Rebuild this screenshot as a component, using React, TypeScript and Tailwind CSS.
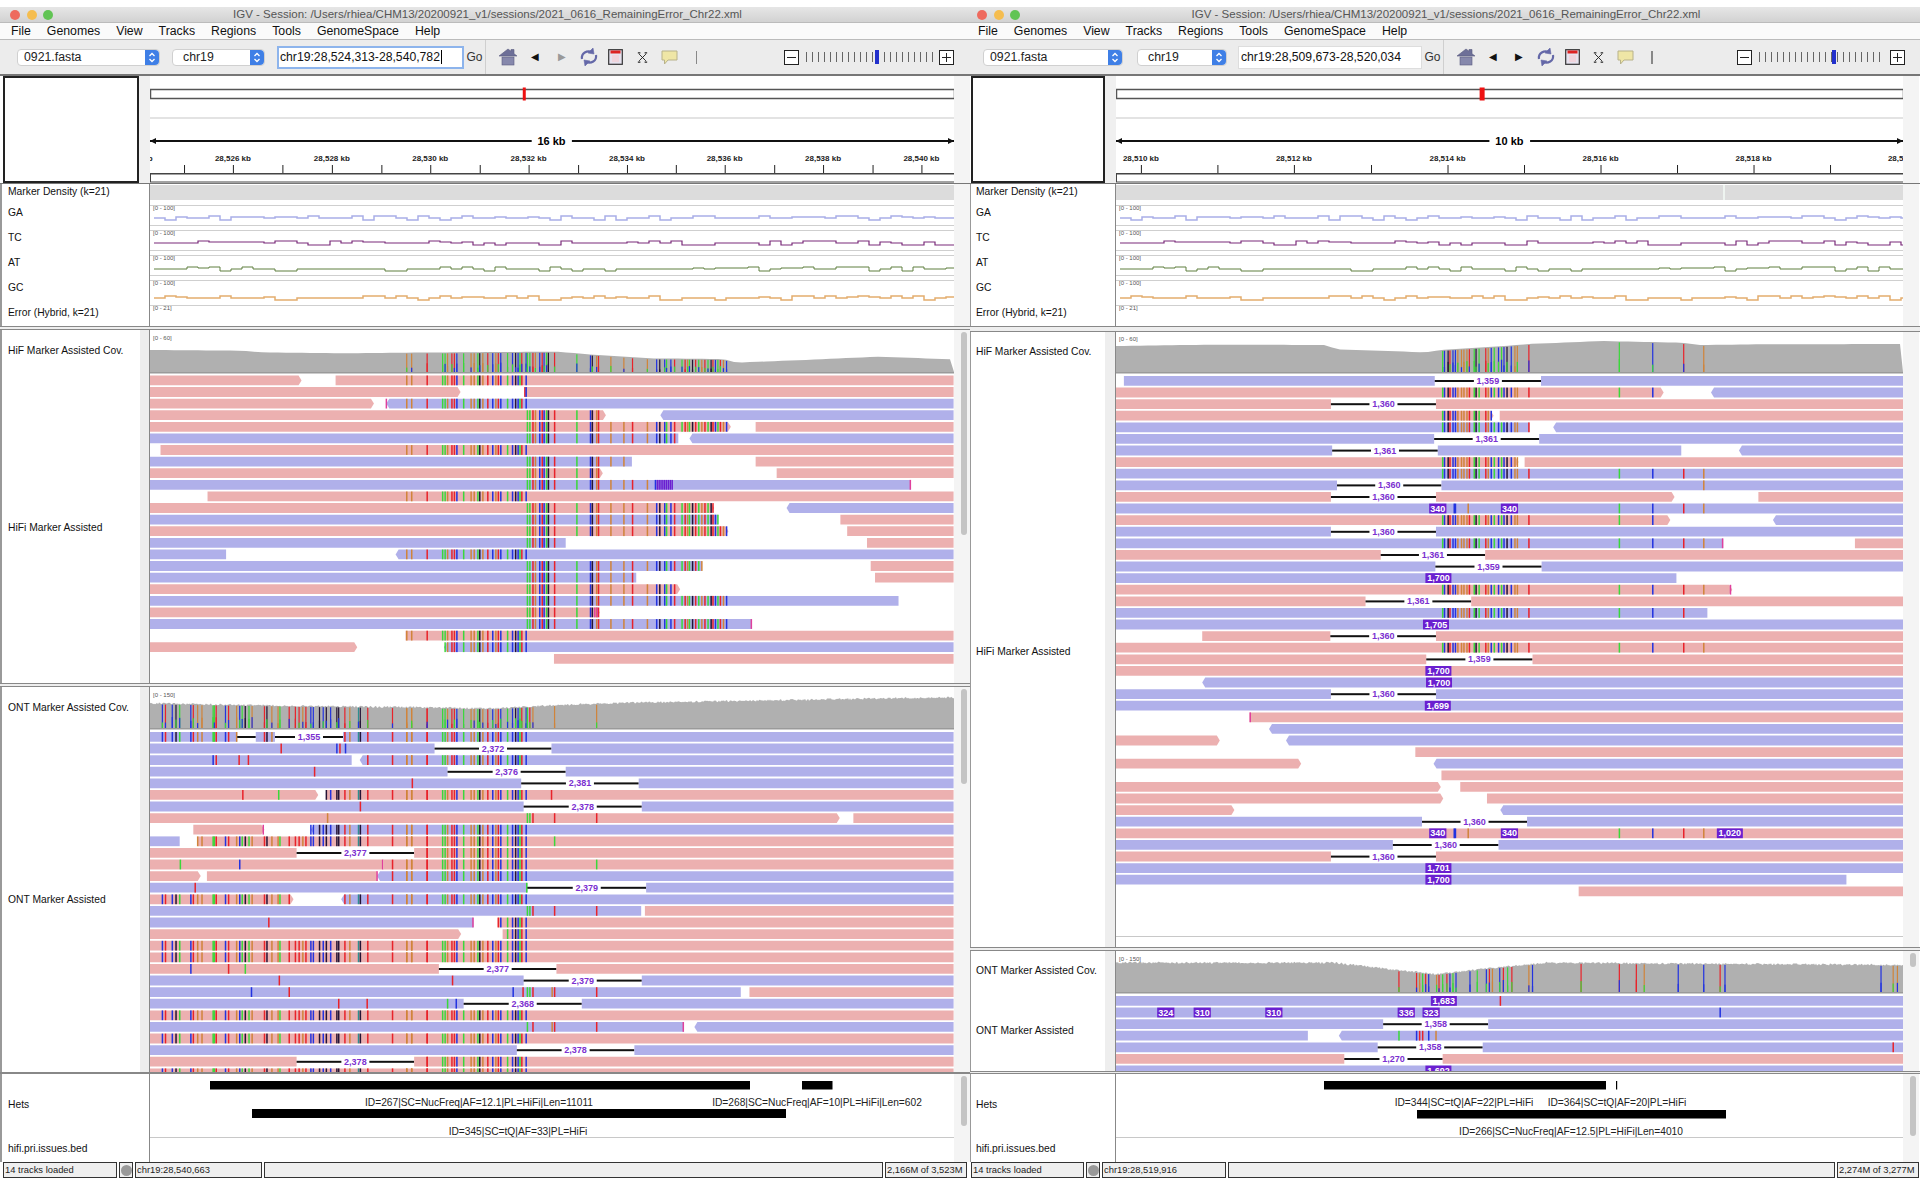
import React from "react";

// colours for mismatch stripes
const COL: Record<string, string> = {
  r: "#e8232a",
  g: "#3ad83a",
  b: "#2233e0",
  o: "#d0843a",
  k: "#241436",
  m: "#e0409c",
  v: "#6a1fd0",
  t: "#2f8f8f",
};

const A = "658o 666o 691r 716g 720g 724o 731r 735r 739b 750g 762o 767o 773g 776k 781o 789r 797b 802o 806r 810b 821g 829b 834k 838b 841g 844r 851b";
const B = "853g 857g 862r 866o 873b 877r 880b 884g 887k 897r 933g 955b 958k 965o 968r";
const C = "988o 1009o 1023r 1047o 1062b 1067k 1075b 1078g 1085b 1091r 1103g 1108r 1112o 1115g 1120k 1125r 1130g 1135o 1140r 1145g 1150k 1153r 1157b 1161g 1165r 1170o 1175b";
const C1 = "988o 1009o 1023r 1047o";
const D = "263b 268r 279b 285k 291g 309b 313r 320o 327o 345g 347g 350r 365b 370r 383o 388b 392g 397k 403g 408o 428r 432k 440o 450o 453g 468r 478r 484r 490o 495r 503b 507b 517k 523b 528k 535b 545k 548k 558r 566o 580t 583k 595r";
const O = "635r 658o 666o 691r";
const E = "778g 781b 787k 790r 795b 799b 803o 809o 813o 818o 822r 830g 833k 838g 849r 853o 858b 863g 870b 875g 879b 884k 891b 897o 901o 920r";
const F = "1069g 1124b 1175r 1208o";

type Item =
  | { k: "p" | "b"; a: number; b: number; s: string; d: string }
  | { k: "g"; a: number; b: number; l: string }
  | { k: "i"; x: number; l: string };

const p = (a: number, b: number, s = "", d = ""): Item => ({ k: "p", a, b, s, d });
const bl = (a: number, b: number, s = "", d = ""): Item => ({ k: "b", a, b, s, d });
const g = (a: number, b: number, l = ""): Item => ({ k: "g", a, b, l });
const ins = (x: number, l: string): Item => ({ k: "i", x, l });

const hifiLeft: Item[][] = [
  [p(243, 488, "", ">"), p(543, 1542, A)],
  [p(243, 745, "", ">"), p(848, 1542, "849r 851b")],
  [p(243, 605, "", ">"), bl(625, 1542, "625m " + A, "<")],
  [p(243, 980, B, ">"), bl(1068, 1542, "", "<")],
  [p(243, 1182, `${B} ${C}`, ">"), p(1222, 1542)],
  [bl(243, 1097, `${B} ${C}`), bl(1115, 1542, "", "<")],
  [p(260, 1542, A)],
  [bl(243, 1022, `${B} ${C}`), p(1222, 1542)],
  [p(243, 975, B, ">"), p(1256, 1542)],
  [bl(243, 1473, `${B} ${C1} 1060b 1063v 1066v 1069v 1072v 1075v 1078v 1081v 1084v 1087v 1472m`), ],
  [p(336, 1542, A)],
  [p(243, 1155, `${B} ${C}`, ">"), bl(1272, 1542, "", "<")],
  [bl(243, 1161, `${B} ${C}`), p(1359, 1542)],
  [p(243, 1178, `${B} ${C}`, ">"), p(1370, 1542)],
  [bl(243, 915, B), p(1402, 1542)],
  [bl(243, 366), bl(640, 1542, A, "<")],
  [bl(243, 1135, `${B} ${C}`), p(1408, 1542)],
  [bl(243, 1029, `${B} ${C}`), p(1415, 1542)],
  [p(243, 1100, `${B} ${C}`, ">")],
  [bl(243, 1453, `${B} ${C}`)],
  [p(243, 970, `${B} 962m 966m`, ">")],
  [bl(243, 1216, `${B} ${C} 1215m`)],
  [p(656, 1542, A)],
  [p(243, 578, "", ">"), bl(718, 1542, A, "<")],
  [p(896, 1542)],
];

const ontLeft: Item[][] = [
  [bl(243, 384, D), g(384, 414), bl(414, 445, D), g(445, 555, "1,355"), bl(555, 1542, `${D} ${O} ${A}`)],
  [bl(243, 703, "455r 545b 550r 559b"), g(703, 892, "2,372"), bl(892, 1542)],
  [bl(243, 569, "345b 350r 387r 402r"), bl(582, 1542, `595r ${O} ${A}`, "<")],
  [bl(243, 724, "509r"), g(724, 915, "2,376"), bl(915, 1542)],
  [bl(243, 843, "667r"), g(843, 1033, "2,381"), bl(1033, 1542)],
  [p(243, 515, "393r 451g", ">"), p(528, 1542, `${D} ${O} ${A} 892r`)],
  [bl(243, 847, "583r"), g(847, 1038, "2,378"), bl(1038, 1542)],
  [p(243, 1358, "530o 853g 857g 862r 897r 965r", ">"), p(1380, 1542)],
  [p(313, 428, "426m", ">"), bl(503, 1542, `${D} ${O} ${A}`, "<")],
  [bl(243, 291), p(320, 1542, `${D} ${O} ${A} 897g`)],
  [p(243, 480), g(480, 670, "2,377"), p(670, 1542, `691r ${A}`)],
  [p(243, 620, "292g 388b 619m"), p(620, 1542, `${O} ${A} 965g`)],
  [p(243, 325, "", ">"), p(335, 610), bl(610, 1542, `610m ${O} ${A}`, "<")],
  [bl(243, 853, "316r 852g"), g(853, 1045, "2,379"), bl(1045, 1542)],
  [p(243, 475, D, ">"), bl(552, 1542, `${D} ${O} ${A}`, "<")],
  [bl(243, 1037, "853g 857g 862r 897r 965r"), p(1043, 1542)],
  [bl(243, 766, "435r 765m"), p(805, 1542, A)],
  [p(243, 746, "", ">"), p(813, 1542, A)],
  [p(243, 1542, `${D} ${O} ${A}`)],
  [p(243, 1542, `${D} ${O} ${A}`)],
  [p(243, 710, "309b 370r 397g"), g(710, 900, "2,377"), p(900, 1542)],
  [bl(243, 847, "452r 732r"), g(847, 1038, "2,379"), bl(1038, 1542)],
  [bl(243, 1198, "407b 468r 830b 846r 853g 857g 862r 893o 897r 965r"), p(1212, 1542)],
  [bl(243, 750, "548r 594r 724g 738b"), g(750, 941, "2,368"), bl(941, 1542)],
  [p(243, 1542, `${D} ${O} ${A}`)],
  [bl(243, 1106, "853g 862r 893o 897r 965r 1105m"), bl(1123, 1542, "", "<")],
  [p(243, 1542, `${D} ${O} ${A}`)],
  [bl(243, 836), g(836, 1026, "2,378"), bl(1026, 1542)],
  [p(243, 480), g(480, 670, "2,378"), p(670, 1542, `691r ${A}`)],
  [p(243, 1542, `${D} ${O} ${A}`)],
];

const hifiRight: Item[][] = [
  [bl(253, 765), g(765, 940, "1,359"), bl(940, 1537)],
  [p(240, 1142, `${E} 1069g 1124b`, ">"), bl(1220, 1537, "", "<")],
  [p(240, 594), g(594, 767, "1,360"), p(767, 1537)],
  [p(240, 862, E, ">"), p(872, 1537)],
  [bl(240, 921, E), bl(960, 1537, "", "<")],
  [bl(240, 764), g(764, 937, "1,361"), bl(937, 1537)],
  [bl(240, 596), g(596, 770, "1,361"), bl(770, 1171), bl(1266, 1537, "", "<")],
  [p(240, 903, E, ">"), p(913, 1537)],
  [bl(240, 1537, `${E} ${F}`)],
  [bl(240, 604), g(604, 776, "1,360"), bl(776, 1537, "1208o")],
  [p(240, 594), g(594, 767, "1,360"), p(767, 1160, "", ">"), p(1298, 1537)],
  [bl(240, 1537, `797b 799b 820o ${F}`), ins(770, "340"), ins(888, "340")],
  [p(240, 1153, `${E} 1069g 1124b`, ">"), bl(1322, 1537, "", "<")],
  [bl(240, 594), g(594, 767, "1,360"), bl(767, 1537)],
  [bl(240, 1240, `${E} ${F} 1239m`), p(1457, 1537)],
  [p(240, 676), g(676, 848, "1,361"), p(848, 1537)],
  [bl(240, 766), g(766, 941, "1,359"), bl(941, 1537)],
  [bl(240, 1163), ins(771, "1,700")],
  [p(240, 1255, `${E} ${F} 1252m`, ">")],
  [p(240, 651), g(651, 825, "1,361"), p(825, 1537)],
  [bl(240, 1214, `${E} 1069g 1124b 1175r`)],
  [bl(240, 1537), ins(767, "1,705")],
  [p(382, 593), g(593, 767, "1,360"), p(767, 1537)],
  [p(240, 1537, `${E} ${F}`)],
  [p(240, 751), g(751, 926, "1,359"), p(926, 1537)],
  [p(240, 1537), ins(771, "1,700")],
  [bl(382, 1537, "", "<"), ins(772, "1,700")],
  [bl(240, 594), g(594, 767, "1,360"), bl(767, 1537)],
  [bl(240, 1537), ins(770, "1,699")],
  [p(460, 1537, "461m")],
  [bl(492, 1537, "", "<")],
  [p(240, 411, "", ">"), bl(520, 1537, "", "<")],
  [p(733, 1537)],
  [p(240, 545, "", ">"), bl(763, 1537, "", "<")],
  [p(776, 1537)],
  [p(240, 775, "", ">"), p(807, 1537)],
  [p(240, 779, "", ">"), p(851, 1537)],
  [p(240, 435, "", ">"), bl(873, 1537, "", "<")],
  [bl(240, 744), g(744, 917, "1,360"), bl(917, 1537)],
  [p(240, 1537, `797b 799b 820o ${F}`), ins(770, "340"), ins(888, "340"), ins(1251, "1,020")],
  [bl(240, 696), g(696, 870, "1,360"), bl(870, 1537)],
  [p(240, 594), g(594, 767, "1,360"), p(767, 1537)],
  [bl(240, 1537), ins(771, "1,701")],
  [bl(240, 1443), ins(771, "1,700")],
  [p(1002, 1537)],
];

const ontRight: Item[][] = [
  [bl(240, 1537, "873r"), ins(780, "1,683")],
  [bl(240, 1537, "1235b"), ins(322, "324"), ins(382, "310"), ins(500, "310"), ins(718, "336"), ins(759, "323")],
  [bl(240, 680), g(680, 853, "1,358"), bl(853, 1537)],
  [bl(240, 556), bl(607, 1537, "706g 735b 740r 745r 755b 767o", "<")],
  [bl(240, 671), g(671, 844, "1,358"), bl(844, 1537, "1520r")],
  [p(240, 616), g(616, 778, "1,270"), p(778, 1537)],
  [bl(240, 1537), ins(771, "1,692")],
];

const rnd = (i: number, s: number) => {
  const v = Math.sin(i * 12.9898 + s * 78.233) * 43758.5453;
  return v - Math.floor(v);
};

const parse = (s: string) =>
  s
    .split(" ")
    .filter(Boolean)
    .map((t) => ({ z: parseFloat(t), c: COL[t[t.length - 1]] }));

function Reads({ rows, y0, z0, kx }: { rows: Item[][]; y0: number; z0: number; kx: number }) {
  const X = (z: number) => (z - z0) / kx;
  const h = 9.8;
  return (
    <g>
      {rows.map((row, ri) => {
        const y = y0 + ri * 11.6;
        return (
          <g key={ri}>
            {row.map((it, i) => {
              if (it.k === "g") {
                const mid = X((it.a + it.b) / 2);
                return (
                  <g key={i}>
                    <rect x={X(it.a)} y={y + 4} width={X(it.b) - X(it.a)} height={2} fill="#111" />
                    {it.l && (
                      <>
                        <rect x={mid - 14} y={y} width={28} height={h} fill="#fff" />
                        <text x={mid} y={y + 8} textAnchor="middle" className="fill-[#7b2fd0] text-[9px] font-bold">
                          {it.l}
                        </text>
                      </>
                    )}
                  </g>
                );
              }
              if (it.k === "i") {
                const w = it.l.length * 4.4 + 4;
                return (
                  <g key={i}>
                    <rect x={X(it.x) - w / 2} y={y} width={w} height={h} fill="#6a1fd0" />
                    <text x={X(it.x)} y={y + 8} textAnchor="middle" className="fill-white text-[9px] font-bold">
                      {it.l}
                    </text>
                  </g>
                );
              }
              const a = X(it.a);
              const b = X(it.b);
              const pts =
                it.d === ">"
                  ? `${a},${y} ${b - 3},${y} ${b},${y + h / 2} ${b - 3},${y + h} ${a},${y + h}`
                  : it.d === "<"
                    ? `${a + 3},${y} ${b},${y} ${b},${y + h} ${a + 3},${y + h} ${a},${y + h / 2}`
                    : `${a},${y} ${b},${y} ${b},${y + h} ${a},${y + h}`;
              return (
                <g key={i}>
                  <polygon points={pts} fill={it.k === "p" ? "#ecb0b0" : "#b0b0ea"} />
                  {parse(it.s)
                    .filter((st) => st.z >= it.a && st.z <= it.b)
                    .map((st, j) => (
                      <rect key={j} x={X(st.z) - 0.7} y={y} width={1.5} height={h} fill={st.c} />
                    ))}
                </g>
              );
            })}
          </g>
        );
      })}
    </g>
  );
}

function Coverage({
  pts,
  off,
  z0,
  kx,
  w,
  bottom,
  stripes,
  jag,
}: {
  pts: number[][];
  off: number;
  z0: number;
  kx: number;
  w: number;
  bottom: number;
  stripes: string;
  jag: number;
}) {
  const topAt = (x: number) => {
    const z = x * kx + z0;
    let y = pts[pts.length - 1][1];
    for (let i = 0; i < pts.length - 1; i++) {
      if (z >= pts[i][0] && z <= pts[i + 1][0]) {
        y = pts[i][1] + ((pts[i + 1][1] - pts[i][1]) * (z - pts[i][0])) / (pts[i + 1][0] - pts[i][0]);
        break;
      }
    }
    return y / 3 + off;
  };
  const poly: string[] = [`0,${bottom}`];
  for (let x = 0; x <= w; x += jag ? 1 : 8) {
    poly.push(`${x},${topAt(x) + (jag ? rnd(x, 3) * jag - jag / 2 : 0)}`);
  }
  poly.push(`${w},${bottom}`);
  return (
    <g>
      <polygon points={poly.join(" ")} fill="#b0b0b0" />
      {parse(stripes).map((st, i) => {
        const x = (st.z - z0) / kx;
        const t = topAt(x) + 1;
        const low = bottom - (bottom - t) * (0.2 + 0.3 * rnd(i, 7));
        return (
          <g key={i}>
            <rect x={x - 0.6} y={t} width={1.2} height={bottom - t} fill={st.c} />
            <rect x={x - 0.6} y={low} width={1.2} height={bottom - low} fill={i % 3 === 0 ? COL.g : i % 3 === 1 ? COL.b : st.c} />
          </g>
        );
      })}
      <rect x={0} y={bottom} width={w} height={1.5} fill="#9a9a9a" />
    </g>
  );
}

function Signal({ w, base, seed, color, sw }: { w: number; base: number; seed: number; color: string; sw: number }) {
  const pts: string[] = [];
  let y = base;
  for (let x = 4, i = 0; x < w; x += 11, i++) {
    const r = rnd(i, seed);
    const next = base + (r > 0.8 ? -2 : r > 0.62 ? 2 : r > 0.5 ? -1 : 0);
    pts.push(`${x},${y}`, `${x},${next}`);
    y = next;
  }
  pts.push(`${w},${y}`);
  return <polyline points={pts.join(" ")} fill="none" stroke={color} strokeWidth={sw} />;
}

function ScaleText({ y, t }: { y: number; t: string }) {
  return (
    <text x={3} y={y} className="fill-[#555] text-[6px]">
      {t}
    </text>
  );
}

function HeaderTrack({
  w,
  z0,
  kx,
  redZ,
  redW,
  span,
  spanZ,
  gap,
  majors,
  minors,
}: {
  w: number;
  z0: number;
  kx: number;
  redZ: number;
  redW: number;
  span: string;
  spanZ: number;
  gap: number[];
  majors: [number, string][];
  minors: number[];
}) {
  const X = (z: number) => (z - z0) / kx;
  return (
    <svg width={w} height={107} className="block shrink-0 overflow-hidden bg-white">
      <rect x={0.5} y={13.5} width={w} height={9} fill="#fff" stroke="#555" strokeWidth={1.5} />
      <rect x={X(redZ) - redW / 2} y={11.5} width={redW} height={13} fill="#ee1111" />
      <rect x={0} y={41.5} width={w} height={1} fill="#c8c8c8" />
      <rect x={0} y={64} width={X(gap[0])} height={2} fill="#111" />
      <rect x={X(gap[1])} y={64} width={w - X(gap[1])} height={2} fill="#111" />
      <polygon points={`0,65 6,62 6,68`} fill="#111" />
      <polygon points={`${w},65 ${w - 6},62 ${w - 6},68`} fill="#111" />
      <text x={X(spanZ)} y={69} textAnchor="middle" className="fill-black text-[11px] font-bold">
        {span}
      </text>
      {majors.map(([z, t]) => (
        <g key={z}>
          <text x={X(z)} y={85} textAnchor="middle" className="fill-[#222] text-[8px] font-bold">
            {t}
          </text>
          <rect x={X(z)} y={89} width={1} height={8} fill="#222" />
        </g>
      ))}
      {minors.map((z) => (
        <rect key={z} x={X(z)} y={89} width={1} height={8} fill="#222" />
      ))}
      <rect x={0} y={97} width={w} height={1.5} fill="#444" />
      <rect x={0.5} y={98} width={w} height={8} fill="#fff" stroke="#444" strokeWidth={1} />
    </svg>
  );
}

function DataTrack({ w, gapX }: { w: number; gapX?: number }) {
  return (
    <svg width={w} height={142} className="block shrink-0 bg-white">
      <rect x={0} y={1} width={w} height={15} fill="#dcdcdc" />
      {gapX !== undefined && <rect x={gapX} y={1} width={2} height={15} fill="#eef4f0" />}
      {[21, 41, 46, 66, 71, 91, 96, 121].map((y) => (
        <rect key={y} x={0} y={y} width={w} height={1} fill="#cfcfcf" />
      ))}
      <ScaleText y={26} t="[0 - 100]" />
      <ScaleText y={51} t="[0 - 100]" />
      <ScaleText y={76} t="[0 - 100]" />
      <ScaleText y={101} t="[0 - 100]" />
      <ScaleText y={126} t="[0 - 21]" />
      <Signal w={w} base={34} seed={1} color="#a9aee8" sw={1.5} />
      <Signal w={w} base={59} seed={2} color="#7a2a7a" sw={1.2} />
      <Signal w={w} base={85} seed={3} color="#5f7f3f" sw={1} />
      <Signal w={w} base={114} seed={4} color="#e3ad6e" sw={1.5} />
    </svg>
  );
}

function Stepper() {
  return (
    <span className="flex h-full w-[14px] items-center justify-center rounded-r-[4px] bg-[#3f7fe6]">
      <svg width={8} height={13} viewBox="0 0 8 13">
        <path d="M1.5 5 4 2.5 6.5 5M1.5 8 4 10.5 6.5 8" fill="none" stroke="#fff" strokeWidth={1.3} />
      </svg>
    </span>
  );
}

function Sel({ text, cls }: { text: string; cls: string }) {
  return (
    <div className={`flex h-[17px] items-center justify-between rounded-[4px] border border-[#d0d0d0] bg-white text-[12.3px] text-[#222] ${cls}`}>
      <span>{text}</span>
      <Stepper />
    </div>
  );
}

function HomeIcon() {
  return (
    <svg width={20} height={18} viewBox="0 0 20 18">
      <path d="M1 8 10 1l3 2.2V1.5h3v4.2L19 8z" fill="#6d6f98" stroke="#5a5c80" strokeWidth={0.6} />
      <rect x={4} y={9} width={12} height={8} fill="#8688ac" stroke="#5a5c80" strokeWidth={0.6} />
    </svg>
  );
}

function RefreshIcon() {
  return (
    <svg width={20} height={20} viewBox="0 0 20 20" fill="none" stroke="#6468a8" strokeWidth={2.2}>
      <path d="M3 12C2 6 8 3 13 5" />
      <path d="M17 8c1 6-5 9-10 7" />
      <path d="M14 1l1 6-6-1z" fill="#6468a8" strokeWidth={0.6} />
      <path d="M6 19l-1-6 6 1z" fill="#6468a8" strokeWidth={0.6} />
    </svg>
  );
}

function RegionIcon() {
  return (
    <svg width={15} height={16} viewBox="0 0 15 16">
      <rect x={0.7} y={0.7} width={13.6} height={14.6} fill="#e6e2ee" stroke="#333" strokeWidth={1.2} />
      <rect x={2.5} y={1.5} width={10} height={3} fill="#dd2222" />
      <rect x={4} y={6} width={7} height={7} fill="#f0d4dc" />
    </svg>
  );
}

function CrossIcon() {
  return (
    <svg width={11} height={11} viewBox="0 0 13 13" fill="none" stroke="#222" strokeWidth={1.1}>
      <path d="M2.5 2.5l8 8M10.5 2.5l-8 8" />
      <path d="M1 1h3M9 1h3M1 12h3M9 12h3" strokeWidth={1.3} />
    </svg>
  );
}

function NoteIcon() {
  return (
    <svg width={17} height={15} viewBox="0 0 17 15">
      <path d="M1 1h15v9H7l-3.5 4V10H1z" fill="#efe6a6" stroke="#b8b28a" strokeWidth={1} />
    </svg>
  );
}

function Slider({ cls, w, thumb }: { cls: string; w: number; thumb: number }) {
  const ticks: number[] = [];
  for (let x = 0; x <= w; x += 6) ticks.push(x);
  return (
    <svg width={w + 1} height={16} className={`block ${cls}`}>
      {ticks.map((x) => (
        <rect key={x} x={x} y={3} width={1} height={10} fill="#666" />
      ))}
      <rect x={thumb - 2} y={1} width={4} height={14} fill="#2230cc" />
    </svg>
  );
}

function PlusMinus({ plus, cls = "" }: { plus?: boolean; cls?: string }) {
  return (
    <span className={`flex h-[15px] w-[15px] items-center justify-center border border-[#222] bg-white ${cls}`}>
      <svg width={9} height={9} viewBox="0 0 9 9" stroke="#222" strokeWidth={1}>
        <path d="M0 4.5h9" />
        {plus && <path d="M4.5 0v9" />}
      </svg>
    </span>
  );
}

function Toolbar({ left, loc }: { left: boolean; loc: string }) {
  const slot = left ? "w-[27px]" : "w-[26.5px]";
  const icons = [
    <HomeIcon key="h" />,
    <span key="p" className="text-[10px] leading-none text-[#111]">◀</span>,
    <span key="n" className={`text-[10px] leading-none ${left ? "text-[#999]" : "text-[#111]"}`}>▶</span>,
    <RefreshIcon key="r" />,
    <RegionIcon key="g" />,
    <CrossIcon key="c" />,
    <NoteIcon key="o" />,
    <span key="b" className="h-[13px] w-[1.5px] bg-[#888]" />,
  ];
  return (
    <div className={`flex h-[34px] items-center bg-[#ececec] ${left ? "pl-[17px]" : "pl-[13px]"}`}>
      <Sel text="0921.fasta" cls={left ? "w-[143px] pl-[6px]" : "w-[140px] pl-[6px]"} />
      <Sel text="chr19" cls={left ? "ml-[12px] w-[93px] pl-[10px]" : "ml-[14px] w-[90px] pl-[10px]"} />
      <div
        className={
          left
            ? "ml-[12px] flex h-[23px] w-[187px] items-center border-2 border-[#8db4ec] bg-white pl-[1px] text-[12.2px] text-[#111]"
            : "ml-[11px] flex h-[23px] w-[184px] items-center border border-[#dddddd] bg-white pl-[2px] text-[12.2px] text-[#111]"
        }
      >
        {loc}
        {left && <span className="ml-[1px] h-[14px] w-[1px] bg-black" />}
      </div>
      <div className="flex h-full w-[22px] items-center justify-center border-r border-[#cfcfcf] text-[12px] text-[#333]">Go</div>
      <div className={`flex items-center ${left ? "ml-[8px]" : "ml-[9px]"}`}>
        {icons.map((ic, i) => (
          <span key={i} className={`flex items-center justify-center ${slot}`}>
            {ic}
          </span>
        ))}
      </div>
      <PlusMinus cls={left ? "ml-[74px]" : "ml-[72px]"} />
      <Slider cls="ml-[7px]" w={left ? 126 : 123} thumb={left ? 71 : 75} />
      <PlusMinus plus cls={left ? "ml-[6px]" : "ml-[7px]"} />
    </div>
  );
}

function Label({ text, cls }: { text: string; cls: string }) {
  return <div className={`flex items-center whitespace-nowrap text-[10.3px] leading-none text-[#111] ${cls}`}>{text}</div>;
}

function Scroll({ thumb }: { thumb?: string }) {
  return (
    <div className="flex w-[16px] shrink-0 justify-center bg-[#f4f4f4] pt-[2px] pl-[3px]">
      {thumb && <div className={`w-[6px] rounded-full bg-[#c4c4c4] ${thumb}`} />}
    </div>
  );
}

function Status({ cls, text }: { cls: string; text?: string }) {
  return (
    <div className={`flex h-[16px] items-center whitespace-nowrap border border-[#333] bg-[#efefef] pl-[1px] text-[9.4px] text-[#222] ${cls}`}>
      {text}
    </div>
  );
}

function TitleBar({ shift }: { shift: string }) {
  return (
    <div className={`flex h-[15px] items-center bg-gradient-to-b from-[#e6e6e6] to-[#d2d2d2] ${shift}`}>
      <span className="h-[10px] w-[10px] rounded-full bg-[#ee6a5e]" />
      <span className="ml-[6.5px] h-[10px] w-[10px] rounded-full bg-[#f5bd4f]" />
      <span className="ml-[6.5px] h-[10px] w-[10px] rounded-full bg-[#61c454]" />
      <span className="flex-1 pr-[48px] text-center text-[11.5px] text-[#555]">
        IGV - Session: /Users/rhiea/CHM13/20200921_v1/sessions/2021_0616_RemainingError_Chr22.xml
      </span>
    </div>
  );
}

function Menu({ shift }: { shift: string }) {
  return (
    <div className={`flex h-[18px] items-center gap-[16px] border-y border-[#bbb] bg-[#fafafa] text-[12.3px] text-[#111] ${shift}`}>
      {["File", "Genomes", "View", "Tracks", "Regions", "Tools", "GenomeSpace", "Help"].map((m) => (
        <span key={m}>{m}</span>
      ))}
    </div>
  );
}

function Left() {
  const z0 = 243;
  const kx = 1.6165;
  const w = 804;
  const hifiH = 353;
  const ontH = 385;
  return (
    <div className="flex w-[970px] shrink-0 flex-col">
      <div className="h-[7px] bg-white" />
      <TitleBar shift="pl-[10px]" />
      <Menu shift="pl-[11px]" />
      <Toolbar left loc="chr19:28,524,313-28,540,782" />
      <div className="h-[2px] bg-[#777]" />
      <div className="flex h-[107px]">
        <div className="ml-[3px] w-[136px] border-2 border-[#222] bg-white" />
        <div className="w-[11px] bg-[#f0f0f0]" />
        <HeaderTrack
          w={w}
          z0={z0}
          kx={kx}
          redZ={848}
          redW={3}
          span="16 kb"
          spanZ={892}
          gap={[860, 925]}
          majors={[
            [218, "28,524 kb"],
            [377, "28,526 kb"],
            [537, "28,528 kb"],
            [696, "28,530 kb"],
            [855, "28,532 kb"],
            [1014, "28,534 kb"],
            [1172, "28,536 kb"],
            [1331, "28,538 kb"],
            [1490, "28,540 kb"],
          ]}
          minors={[298, 457, 617, 776, 935, 1093, 1252, 1411]}
        />
        <Scroll />
      </div>
      <div className="h-[1px] bg-[#777]" />
      <div className="flex h-[142px] bg-white">
        <div className="flex w-[150px] shrink-0 flex-col border-l-2 border-[#999] border-r border-r-[#888] pl-[6px]">
          <Label text="Marker Density (k=21)" cls="h-[17px]" />
          <Label text="GA" cls="h-[25px]" />
          <Label text="TC" cls="h-[25px]" />
          <Label text="AT" cls="h-[25px]" />
          <Label text="GC" cls="h-[25px]" />
          <Label text="Error (Hybrid, k=21)" cls="h-[25px]" />
        </div>
        <DataTrack w={w} />
        <Scroll />
      </div>
      <div className="h-[4px] border-y border-[#888] bg-[#eeeeee]" />
      <div className="flex h-[353px] bg-white">
        <div className="flex w-[140px] shrink-0 flex-col border-l-2 border-[#999] pl-[6px]">
          <Label text="HiF Marker Assisted Cov." cls="h-[43px]" />
          <Label text="HiFi Marker Assisted" cls="h-[310px]" />
        </div>
        <div className="w-[10px] shrink-0 border-r border-[#888] bg-[#eeeeee]" />
        <svg width={w} height={hifiH} className="block shrink-0 overflow-hidden bg-white">
          <ScaleText y={10} t="[0 - 60]" />
          <Coverage
            pts={[[243, 510], [390, 512], [420, 517], [560, 520], [650, 518], [900, 515], [960, 524], [1050, 535], [1170, 537], [1190, 548], [1300, 540], [1420, 530], [1540, 538]]}
            off={-150}
            z0={z0}
            kx={kx}
            w={w}
            bottom={42}
            stripes={`${A} ${B} ${C}`}
            jag={0}
          />
          <Reads rows={hifiLeft} y0={45.5} z0={z0} kx={kx} />
        </svg>
        <Scroll thumb="h-[203px]" />
      </div>
      <div className="h-[4px] border-y border-[#888] bg-[#eeeeee]" />
      <div className="flex h-[385px] bg-white">
        <div className="flex w-[140px] shrink-0 flex-col border-l-2 border-[#999] pl-[6px]">
          <Label text="ONT Marker Assisted Cov." cls="h-[42px]" />
          <Label text="ONT Marker Assisted" cls="h-[343px]" />
        </div>
        <div className="w-[10px] shrink-0 border-r border-[#888] bg-[#eeeeee]" />
        <svg width={w} height={ontH} className="block shrink-0 overflow-hidden bg-white">
          <ScaleText y={10} t="[0 - 150]" />
          <Coverage
            pts={[[243, 70], [500, 78], [800, 85], [900, 75], [1020, 68], [1540, 52]]}
            off={-7}
            z0={z0}
            kx={kx}
            w={w}
            bottom={41}
            stripes={`${D} ${O} ${A} 853g 857r 862o 897o 965o`}
            jag={2}
          />
          <Reads rows={ontLeft} y0={45} z0={z0} kx={kx} />
        </svg>
        <Scroll thumb="h-[95px]" />
      </div>
      <div className="h-[2px] bg-[#888]" />
      <div className="flex h-[88px] bg-white">
        <div className="flex w-[150px] shrink-0 flex-col border-l-2 border-[#999] border-r border-r-[#888] pl-[6px]">
          <Label text="Hets" cls="h-[63px]" />
          <Label text="hifi.pri.issues.bed" cls="h-[25px]" />
        </div>
        <svg width={w} height={88} className="block shrink-0 bg-white">
          <rect x={60} y={7} width={540} height={8.5} fill="#000" />
          <rect x={652} y={7} width={30.5} height={8.5} fill="#000" />
          <text x={329} y={32} textAnchor="middle" className="fill-[#222] text-[10.2px]">
            ID=267|SC=NucFreq|AF=12.1|PL=HiFi|Len=11011
          </text>
          <text x={667} y={32} textAnchor="middle" className="fill-[#222] text-[10.2px]">
            ID=268|SC=NucFreq|AF=10|PL=HiFi|Len=602
          </text>
          <rect x={102} y={35} width={534} height={9} fill="#000" />
          <text x={368} y={61} textAnchor="middle" className="fill-[#222] text-[10.2px]">
            ID=345|SC=tQ|AF=33|PL=HiFi
          </text>
          <rect x={0} y={63} width={w} height={1} fill="#c8c8c8" />
        </svg>
        <Scroll thumb="h-[50px]" />
      </div>
      <div className="flex h-[16px] gap-[2px] pl-[3px]">
        <Status cls="w-[114px]" text="14 tracks loaded" />
        <div className="flex h-[16px] w-[14px] items-center justify-center border border-[#333] bg-[#efefef]">
          <span className="h-[11px] w-[11px] rounded-full bg-[#999]" />
        </div>
        <Status cls="w-[127px]" text="chr19:28,540,663" />
        <Status cls="w-[619px]" />
        <Status cls="w-[82px]" text="2,166M of 3,523M" />
      </div>
    </div>
  );
}

function Right() {
  const z0 = 240;
  const kx = 1.647;
  const w = 787;
  return (
    <div className="flex w-[950px] shrink-0 flex-col">
      <div className="h-[7px] bg-white" />
      <TitleBar shift="pl-[7px]" />
      <Menu shift="pl-[8px]" />
      <Toolbar left={false} loc="chr19:28,509,673-28,520,034" />
      <div className="h-[2px] bg-[#777]" />
      <div className="flex h-[107px]">
        <div className="ml-[1px] w-[134px] border-2 border-[#222] bg-white" />
        <div className="w-[11px] bg-[#f0f0f0]" />
        <HeaderTrack
          w={w}
          z0={z0}
          kx={kx}
          redZ={843}
          redW={5}
          span="10 kb"
          spanZ={888}
          gap={[855, 922]}
          majors={[
            [281, "28,510 kb"],
            [533, "28,512 kb"],
            [786, "28,514 kb"],
            [1038, "28,516 kb"],
            [1290, "28,518 kb"],
            [1541, "28,520 kb"],
          ]}
          minors={[407, 660, 912, 1164, 1416]}
        />
        <Scroll />
      </div>
      <div className="h-[1px] bg-[#777]" />
      <div className="flex h-[142px] bg-white">
        <div className="flex w-[146px] shrink-0 flex-col border-l border-[#999] border-r border-r-[#888] pl-[5px]">
          <Label text="Marker Density (k=21)" cls="h-[17px]" />
          <Label text="GA" cls="h-[25px]" />
          <Label text="TC" cls="h-[25px]" />
          <Label text="AT" cls="h-[25px]" />
          <Label text="GC" cls="h-[25px]" />
          <Label text="Error (Hybrid, k=21)" cls="h-[25px]" />
        </div>
        <DataTrack w={w} gapX={607} />
        <Scroll />
      </div>
      <div className="h-[6px] border-y border-[#888] bg-[#eeeeee]" />
      <div className="flex h-[615px] bg-white">
        <div className="flex w-[135px] shrink-0 flex-col border-l border-[#999] pl-[5px]">
          <Label text="HiF Marker Assisted Cov." cls="h-[41px]" />
          <Label text="HiFi Marker Assisted" cls="h-[558px]" />
        </div>
        <div className="w-[11px] shrink-0 border-r border-[#888] bg-[#eeeeee]" />
        <svg width={w} height={615} className="block shrink-0 overflow-hidden bg-white">
          <ScaleText y={9} t="[0 - 60]" />
          <Coverage
            pts={[[240, 48], [400, 44], [590, 45], [600, 58], [750, 67], [775, 60], [880, 48], [920, 42], [1040, 33], [1170, 38], [1200, 45], [1300, 43], [1537, 42]]}
            off={-2}
            z0={z0}
            kx={kx}
            w={w}
            bottom={40}
            stripes={`${E} ${F}`}
            jag={0}
          />
          <Reads rows={hifiRight} y0={44} z0={z0} kx={kx} />
          <rect x={0} y={604} width={w} height={1} fill="#c8c8c8" />
        </svg>
        <Scroll />
      </div>
      <div className="h-[4px] border-y border-[#888] bg-[#eeeeee]" />
      <div className="flex h-[120px] bg-white">
        <div className="flex w-[135px] shrink-0 flex-col border-l border-[#999] pl-[5px]">
          <Label text="ONT Marker Assisted Cov." cls="h-[41px]" />
          <Label text="ONT Marker Assisted" cls="h-[79px]" />
        </div>
        <div className="w-[11px] shrink-0 border-r border-[#888] bg-[#eeeeee]" />
        <svg width={w} height={120} className="block shrink-0 overflow-hidden bg-white">
          <ScaleText y={10} t="[0 - 150]" />
          <Coverage
            pts={[[240, 128], [600, 128], [700, 150], [770, 162], [850, 145], [950, 128], [1100, 130], [1537, 135]]}
            off={-31}
            z0={z0}
            kx={kx}
            w={w}
            bottom={41}
            stripes="706r 735r 740o 745g 750r 755b 768o 772r 778g 785r 790b 795g 800b 823b 835g 850b 855r 860o 872b 878r 885g 892r 920o 926b 1006r 1069r 1097r 1110o 1166b 1208b 1235r 1243b 1500b 1520o 1527o"
            jag={2}
          />
          <Reads rows={ontRight} y0={45} z0={z0} kx={kx} />
        </svg>
        <Scroll thumb="h-[14px]" />
      </div>
      <div className="h-[3px] border-y border-[#888] bg-[#eeeeee]" />
      <div className="flex h-[88px] bg-white">
        <div className="flex w-[146px] shrink-0 flex-col border-l border-[#999] border-r border-r-[#888] pl-[5px]">
          <Label text="Hets" cls="h-[63px]" />
          <Label text="hifi.pri.issues.bed" cls="h-[25px]" />
        </div>
        <svg width={w} height={88} className="block shrink-0 bg-white">
          <rect x={208} y={7} width={282} height={8.5} fill="#000" />
          <rect x={500} y={7} width={1.2} height={8.5} fill="#000" />
          <text x={348} y={32} textAnchor="middle" className="fill-[#222] text-[10.2px]">
            ID=344|SC=tQ|AF=22|PL=HiFi
          </text>
          <text x={501} y={32} textAnchor="middle" className="fill-[#222] text-[10.2px]">
            ID=364|SC=tQ|AF=20|PL=HiFi
          </text>
          <rect x={301} y={36} width={309} height={8.5} fill="#000" />
          <text x={455} y={61} textAnchor="middle" className="fill-[#222] text-[10.2px]">
            ID=266|SC=NucFreq|AF=12.5|PL=HiFi|Len=4010
          </text>
          <rect x={0} y={63} width={w} height={1} fill="#c8c8c8" />
        </svg>
        <Scroll thumb="h-[60px]" />
      </div>
      <div className="flex h-[16px] gap-[2px] pl-[1px]">
        <Status cls="w-[113px]" text="14 tracks loaded" />
        <div className="flex h-[16px] w-[14px] items-center justify-center border border-[#333] bg-[#efefef]">
          <span className="h-[11px] w-[11px] rounded-full bg-[#999]" />
        </div>
        <Status cls="w-[124px]" text="chr19:28,519,916" />
        <Status cls="w-[607px]" />
        <Status cls="w-[82px]" text="2,274M of 3,277M" />
      </div>
    </div>
  );
}

export default function App() {
  return (
    <div className="flex h-[1183px] w-[1920px] overflow-hidden bg-white font-['Liberation_Sans',sans-serif]">
      <Left />
      <Right />
    </div>
  );
}
